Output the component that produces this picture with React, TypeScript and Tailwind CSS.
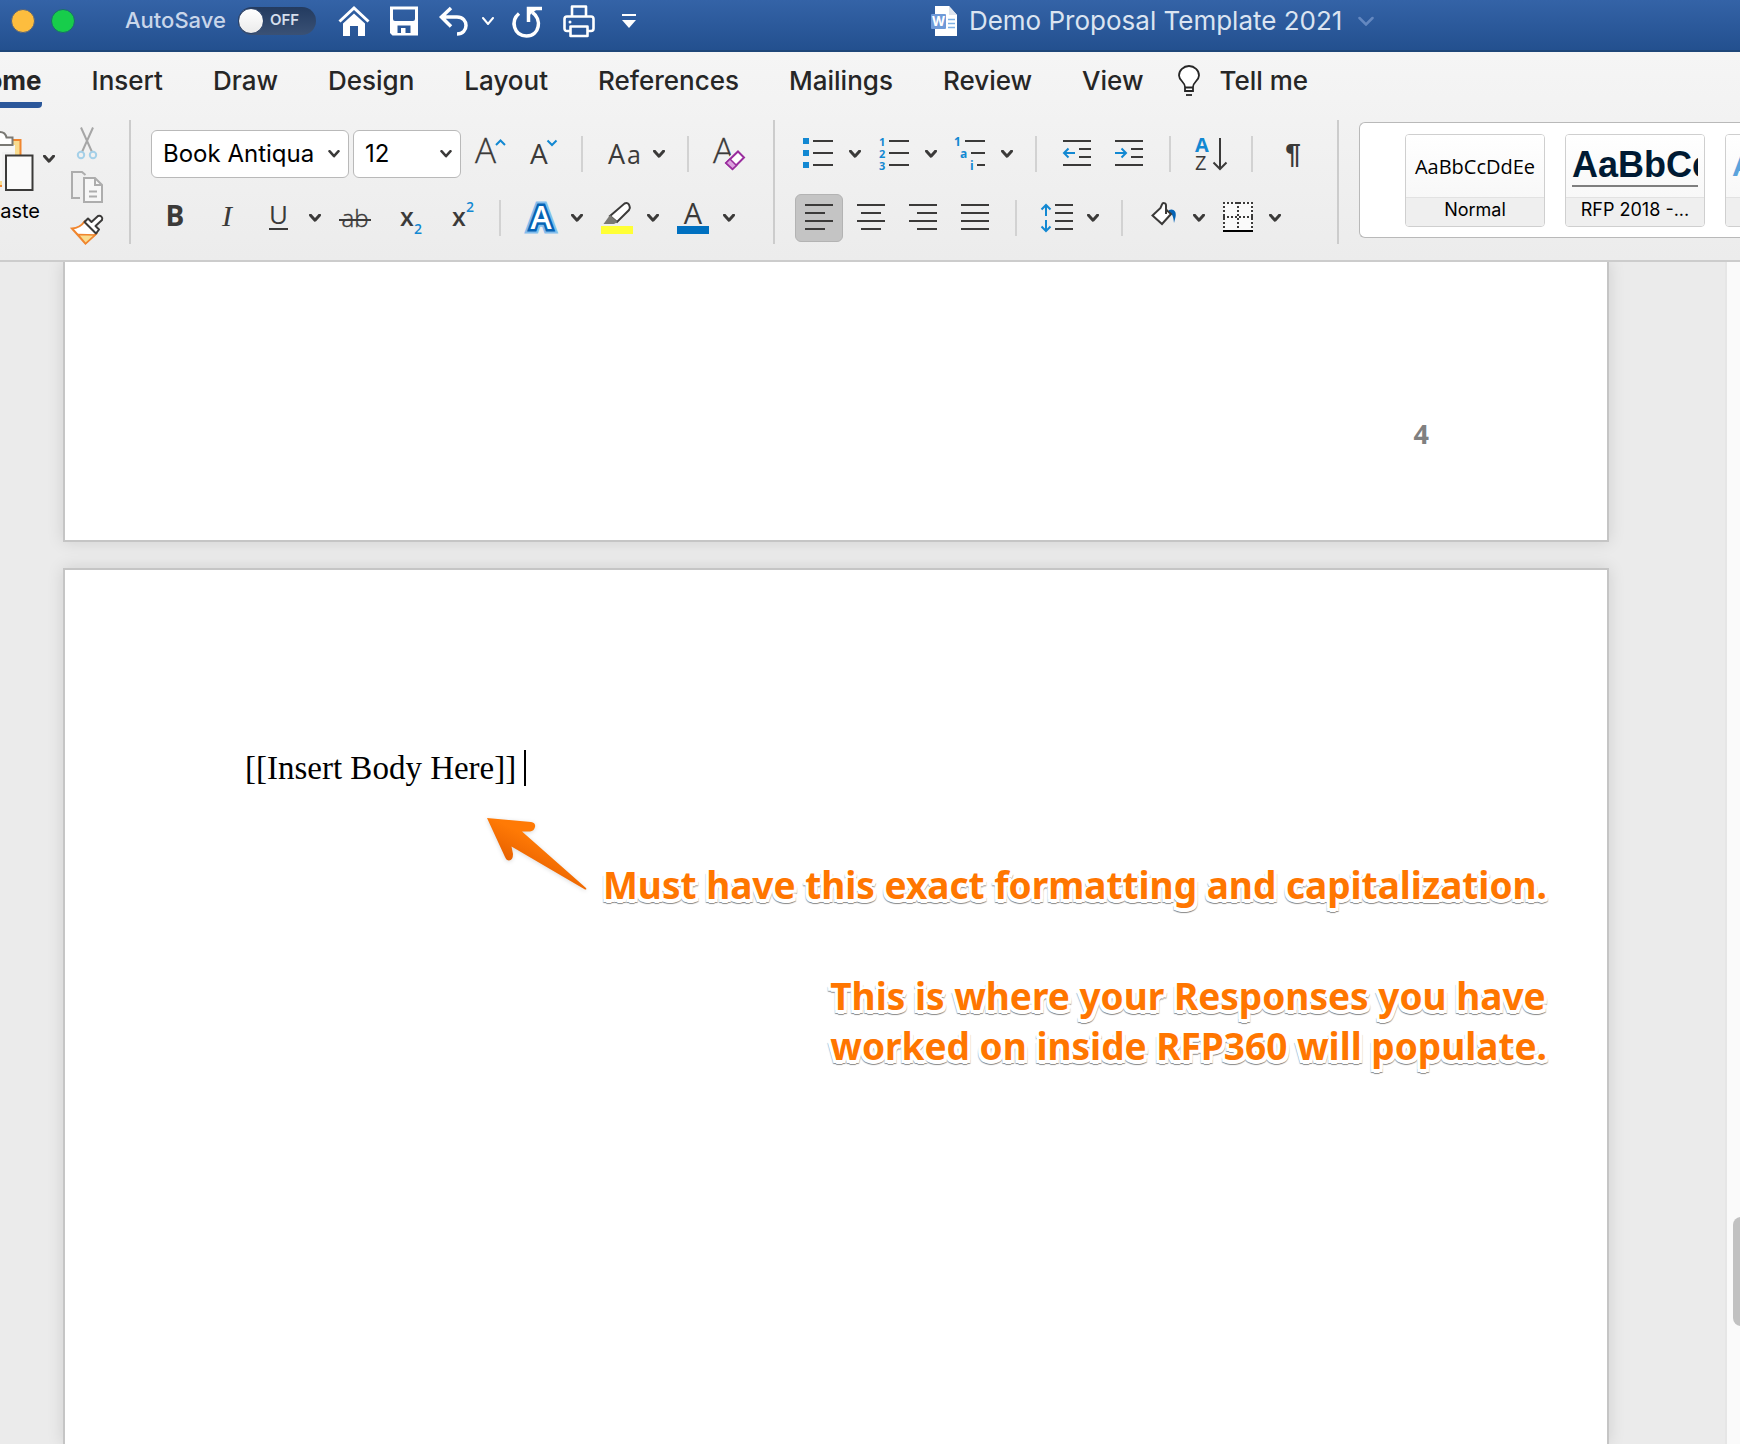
import React, { useState } from 'react';

const INK = '#3b3a39';
const BLUE = '#1288d2';

const TABS = ['Insert', 'Draw', 'Design', 'Layout', 'References', 'Mailings', 'Review', 'View'];

// 32x32 drawing cell shared by all ribbon icons
const Icon = ({ children }: { children: React.ReactNode }) => (
  <svg viewBox="0 0 32 32" className="w-8 h-8 shrink-0 overflow-visible" fill="none" fontFamily="'Open Sans', sans-serif" aria-hidden="true">
    {children}
  </svg>
);

const Tool = ({ label, active, children }: { label: string; active?: boolean; children: React.ReactNode }) => (
  <button
    aria-label={label}
    aria-pressed={active}
    className={`w-12 h-12 rounded-md flex items-center justify-center shrink-0 ${active ? 'bg-[#c4c4c4] border border-[#b3b3b3]' : ''}`}
  >
    <Icon>{children}</Icon>
  </button>
);

const More = ({ label }: { label: string }) => (
  <button aria-label={`${label} options`} className="w-6 h-12 flex items-center justify-center shrink-0 text-[#3b3a39]">
    <svg viewBox="0 0 12 8" className="w-3 h-2" fill="none" stroke="currentColor" strokeWidth="3" strokeLinecap="round" strokeLinejoin="round">
      <path d="M1.5 1.2 6 6.2 10.5 1.2" />
    </svg>
  </button>
);

const SplitTool = ({ label, children }: { label: string; children: React.ReactNode }) => (
  <div className="flex shrink-0">
    <Tool label={label}>{children}</Tool>
    <More label={label} />
  </div>
);

const Divider = () => <div className="w-0.5 h-9 mx-3 bg-[#d2d2d2] shrink-0" />;
const GroupDivider = () => <div className="w-0.5 h-[124px] mx-5 bg-[#cccccc] shrink-0" />;

// Horizontal rules of an icon, each as [x1, x2, y]
const Lines = ({ rows }: { rows: number[][] }) => (
  <path d={rows.map(([a, b, y]) => `M${a} ${y}H${b}`).join('')} stroke={INK} strokeWidth="2" />
);

const Combo = ({ label, options, className }: { label: string; options: string[]; className: string }) => (
  <div className={`relative h-12 shrink-0 ${className}`}>
    <select aria-label={label} className="appearance-none w-full h-full pl-[11px] rounded-md border border-[#b9b9b9] bg-white text-2xl text-black">
      {options.map((o) => <option key={o}>{o}</option>)}
    </select>
    <svg viewBox="0 0 12 8" className="absolute right-[9px] top-5 w-3 h-2 pointer-events-none" fill="none" stroke={INK} strokeWidth="2.5" strokeLinecap="round" strokeLinejoin="round">
      <path d="M1.5 1.2 6 6.2 10.5 1.2" />
    </svg>
  </div>
);

function TitleBar() {
  const [autoSave, setAutoSave] = useState(false);

  return (
    <header className="h-[52px] pb-[9px] pl-[11px] border-b-2 border-[#1e4679] bg-linear-to-b from-[#3463a7] to-[#23508f] flex items-center overflow-hidden whitespace-nowrap">
      <div className="flex gap-4 shrink-0">
        <button aria-label="Minimize" className="w-6 h-6 rounded-full bg-[#fdbd3e] border border-[#4f6180]" />
        <button aria-label="Zoom" className="w-6 h-6 rounded-full bg-[#17cd4b] border border-[#1b6a6c]" />
      </div>

      <label className="ml-[50px] flex items-center gap-3 shrink-0 text-[22px] font-medium text-[#c9d6ea]">
        AutoSave
        <input type="checkbox" className="sr-only" checked={autoSave} onChange={(e) => setAutoSave(e.target.checked)} />
        <span className="w-[78px] h-7 rounded-full bg-linear-to-b from-[#233b60] to-[#3a5175] flex items-center gap-1.5">
          <span className="w-[26px] h-[26px] rounded-full bg-linear-to-b from-white to-[#ebebeb] border border-[#2a4168]" />
          <span className="text-[15px] font-semibold text-[#d5deeb]">{autoSave ? 'ON' : 'OFF'}</span>
        </span>
      </label>

      <div className="ml-[22px] flex items-center shrink-0 text-white">
        <button aria-label="Home">
          <Icon>
            <path d="M1.500 16.500 16 3 30.500 16.500" stroke="#fff" strokeWidth="3" />
            <path d="M5 18.500 16 8.500 27 18.500V31H20V21H12V31H5Z" fill="#fff" />
          </Icon>
        </button>
        <button aria-label="Save" className="ml-[18px]">
          <Icon>
            <path fillRule="evenodd" d="M2 1.500h28v29H4.500L2 28ZM5 4.500V14q0 2 2 2h18q2 0 2-2V4.500ZM9.500 20.500V28h3.500V23H17.500v5h5V20.500Z" fill="#fff" />
          </Icon>
        </button>
        <button aria-label="Undo" className="ml-[18px]">
          <Icon>
            <path d="M13 3 3.500 12 13 21.500M4 12H19c12 0 12 17 0 17" stroke="#fff" strokeWidth="3.500" strokeLinejoin="miter" />
          </Icon>
        </button>
        <button aria-label="Undo history" className="ml-3">
          <svg viewBox="0 0 12 8" className="w-3 h-2" fill="none" stroke="currentColor" strokeWidth="2" strokeLinecap="round"><path d="M1 1 6 7 11 1" /></svg>
        </button>
        <button aria-label="Repeat" className="ml-[17px]">
          <Icon>
            <path d="M8 8.500C-1 16 3 31 15.500 31 29 31 31 14 21.500 7.500" stroke="#fff" strokeWidth="3.500" />
            <path d="M17.500 17V3.500H31" stroke="#fff" strokeWidth="3.500" />
            <path d="M17.500 3.500H27L17.500 11Z" fill="#fff" />
          </Icon>
        </button>
        <button aria-label="Print" className="ml-5">
          <Icon>
            <path d="M9 11V1.500H23V11M7 26H4q-2.500 0-2.500-2.500V14q0-2.500 2.500-2.500H28q2.500 0 2.500 2.500v9.500q0 2.500-2.500 2.500H25M7.500 21.500H24.500V31H7.500Z" stroke="#fff" strokeWidth="2.600" strokeLinejoin="round" />
            <circle cx="7" cy="17" r="1.500" fill="#fff" />
          </Icon>
        </button>
        <button aria-label="Customize toolbar" className="ml-[26px]">
          <svg viewBox="0 0 16 16" className="w-4 h-4" fill="currentColor"><path d="M1 1h14v2H1zM1 7h14l-7 8z" /></svg>
        </button>
      </div>

      <div className="ml-[294px] flex items-center shrink-0">
        <svg viewBox="0 0 26 30" className="w-[26px] h-[30px]" aria-hidden="true">
          <path d="M4 0H18L26 9V30H4Z" fill="#fff" />
          <path d="M18 0V9H26Z" fill="#dfe5ee" />
          <path d="M17 13.500h7M17 17.500h7M17 21.500h7" stroke="#7fb2e6" strokeWidth="1.500" />
          <rect y="8" width="15" height="15" rx="1" fill="#6f9ad8" />
          <text x="7.500" y="20" textAnchor="middle" fontSize="13" fontWeight="700" fontFamily="Inter, sans-serif" fill="#fff">W</text>
        </svg>
        <h1 className="ml-3 text-[26px] leading-8 text-[#dbe4f1]">Demo Proposal Template 2021</h1>
        <svg viewBox="0 0 16 10" className="ml-4 w-4 h-2.5" fill="none" stroke="#6488c0" strokeWidth="2.500" strokeLinecap="round" aria-hidden="true">
          <path d="M1.500 2 8 8.500 14.500 2" />
        </svg>
      </div>
    </header>
  );
}

function TabBar() {
  return (
    <nav className="h-16 flex items-start gap-[50px] overflow-hidden whitespace-nowrap text-[26px] leading-9 font-medium text-[#262626]">
      <a href="#home" className="-ml-[33px] h-14 pt-[11px] border-b-6 border-[#2b579a] rounded-b-sm font-bold">Home</a>
      {TABS.map((tab) => (
        <a key={tab} href={`#${tab.toLowerCase()}`} className="pt-[11px]">{tab}</a>
      ))}
      <a href="#tell-me" className="-ml-4 pt-[11px] flex items-center gap-[18px]">
        <svg viewBox="0 0 24 32" className="w-6 h-8" fill="none" stroke="#262626" strokeWidth="1.800" aria-hidden="true">
          <path d="M8 22C8 17 2 15.500 2 10.500a10 9.500 0 0 1 20 0C22 15.500 16 17 16 22V26H8ZM8 22.500H16" fill="#fff" />
          <path d="M9 30H15" />
        </svg>
        Tell me
      </a>
    </nav>
  );
}

function Clipboard() {
  return (
    <div className="flex shrink-0 -ml-[27px]">
      <div className="flex">
        <button className="w-16 flex flex-col items-end gap-1.5 text-xl text-black">
          <svg viewBox="0 0 64 64" className="w-16 h-16 shrink-0" fill="none" aria-hidden="true">
            <path d="M7 13H47.500V59H7Z" fill="#f9dc8f" stroke="#f0862f" strokeWidth="2" />
            <path d="M12 18H42V54H12Z" fill="#f7f7f7" />
            <path d="M14 18V10.500H20.500C22 3 32 3 33.500 10.500H39.500V18Z" fill="#fff" stroke="#7a7974" strokeWidth="2" />
            <path d="M29 25H42V63H29Z" fill="#f2f2f2" />
            <path d="M33 28.500H59.500V63H33Z" fill="#fafafa" stroke={INK} strokeWidth="2" />
          </svg>
          <span className="-mr-[3px]">Paste</span>
        </button>
        <div className="pt-2"><More label="Paste" /></div>
      </div>
      <div className="ml-[10px] mr-[6px] flex flex-col gap-3">
        <button aria-label="Cut">
          <Icon>
            <path d="M10 .5 21 25M22 .5 11 25" stroke="#a6a6a6" strokeWidth="2" />
            <circle cx="10" cy="28" r="3.200" stroke="#a5d0e8" strokeWidth="2" />
            <circle cx="22" cy="28" r="3.200" stroke="#a5d0e8" strokeWidth="2" />
          </Icon>
        </button>
        <button aria-label="Copy">
          <Icon>
            <path d="M9 27H1V1H11L14.500 4" stroke="#adadad" strokeWidth="2" />
            <path d="M13 7H24L31 14V31H13Z" fill="#f7f7f7" stroke="#adadad" strokeWidth="2" />
            <path d="M24 7V14H31M18 20.500H26M18 25.500H26" stroke="#adadad" strokeWidth="2" />
          </Icon>
        </button>
        <button aria-label="Format painter">
          <Icon>
            <path d="M1 13.500Q9 13 13.500 6.500L25.500 18.500 14.500 28.500Z" fill="#fff" stroke="#f0862f" strokeWidth="2" />
            <path d="M7 19.500 24 20 14.500 28.500Z" fill="#f9dc8f" stroke="#f0862f" strokeWidth="1.500" />
            <path d="M13.500 7 17 3.500 20.500 7 27 1a3 3 0 0 1 4 4L24.500 11 28 14.500 25 18.500Z" fill="#fff" stroke={INK} strokeWidth="2" strokeLinejoin="round" />
          </Icon>
        </button>
      </div>
    </div>
  );
}

function FontGroup() {
  return (
    <div className="flex flex-col gap-4 shrink-0">
      <div className="flex items-center gap-1">
        <Combo label="Font" options={['Book Antiqua', 'Arial', 'Calibri']} className="w-[198px]" />
        <Combo label="Font size" options={['12', '14', '16']} className="w-[108px]" />
        <Tool label="Increase font size">
          <text x="2" y="25" fontSize="35" fontWeight="300" fill={INK} stroke={INK} strokeWidth=".3">A</text>
          <path d="M23 7 27.500 2.500 32 7" stroke={BLUE} strokeWidth="2" />
        </Tool>
        <Tool label="Decrease font size">
          <text x="5" y="26" fontSize="28" fill={INK}>A</text>
          <path d="M22.500 2.500 27 7 31.500 2.500" stroke={BLUE} strokeWidth="2" />
        </Tool>
        <Divider />
        <SplitTool label="Change case">
          <text x="1" y="26" fontSize="27" fill={INK}>A</text>
          <text x="20" y="26" fontSize="25" fill={INK}>a</text>
        </SplitTool>
        <Divider />
        <Tool label="Clear formatting">
          <text x="0" y="25" fontSize="35" fontWeight="300" fill={INK} stroke={INK} strokeWidth=".3">A</text>
          <path d="M25 13.500 31 19.500 19.500 31 13 25Z" fill="#f1f1f1" stroke="#f1f1f1" strokeWidth="5" />
          <path d="M25 13.500 31 19.500 19.500 31 13 25Z" fill="#fff" stroke="#9a2d9e" strokeWidth="2" />
          <path d="M13 25 17 21 23.500 27.500 19.500 31Z" fill="#dba0dd" stroke="#9a2d9e" strokeWidth="1.500" />
        </Tool>
      </div>
      <div className="flex items-center gap-1">
        <Tool label="Bold"><text x="16" y="24" textAnchor="middle" fontSize="28" fontWeight="700" fill={INK}>B</text></Tool>
        <Tool label="Italic"><text x="16" y="24" textAnchor="middle" fontSize="30" fontStyle="italic" fontFamily="'Liberation Serif', serif" fill={INK}>I</text></Tool>
        <SplitTool label="Underline">
          <text x="15.500" y="22" textAnchor="middle" fontSize="26" fill={INK}>U</text>
          <Lines rows={[[6, 25, 27]]} />
        </SplitTool>
        <Tool label="Strikethrough">
          <text x="16" y="25" textAnchor="middle" fontSize="24" fontWeight="300" fill={INK} stroke={INK} strokeWidth=".4">ab</text>
          <Lines rows={[[0, 32, 18]]} />
        </Tool>
        <Tool label="Subscript">
          <text x="9" y="24" fontSize="25" fontWeight="600" fill={INK}>x</text>
          <text x="23" y="32" fontSize="14" fontWeight="600" fill={BLUE}>2</text>
        </Tool>
        <Tool label="Superscript">
          <text x="9" y="24" fontSize="25" fontWeight="600" fill={INK}>x</text>
          <text x="23" y="10" fontSize="14" fontWeight="600" fill={BLUE}>2</text>
        </Tool>
        <Divider />
        <SplitTool label="Text effects">
          <g fontSize="32" fontWeight="600" textAnchor="middle" strokeMiterlimit="2">
            <text x="16" y="27" stroke="#83beec" strokeWidth="9" fill="#83beec">A</text>
            <text x="16" y="27" stroke="#0563b5" strokeWidth="5" fill="#0563b5">A</text>
            <text x="16" y="27" fill="#fff">A</text>
          </g>
        </SplitTool>
        <SplitTool label="Highlight color">
          <path d="M9 14 23.500 1.500q4-1.500 5 2.500 1 2-.5 4L16 20Z" fill="#fff" stroke={INK} strokeWidth="2" />
          <path d="M2.500 22 9 13 16.500 20 13 22Z" fill="#7a7974" />
          <rect y="24" width="32" height="8" fill="#ffff35" />
        </SplitTool>
        <SplitTool label="Font color">
          <text x="16" y="22" textAnchor="middle" fontSize="29" fill={INK}>A</text>
          <rect y="24" width="32" height="8" fill="#0070c0" />
        </SplitTool>
      </div>
    </div>
  );
}

function ParagraphGroup() {
  return (
    <div className="flex flex-col gap-4 shrink-0">
      <div className="flex items-center gap-1">
        <SplitTool label="Bullets">
          <path d="M0 0h6v6H0zM0 12h6v6H0zM0 24h6v6H0z" fill={BLUE} />
          <Lines rows={[[10, 30, 3], [10, 30, 15], [10, 30, 27]]} />
        </SplitTool>
        <SplitTool label="Numbering">
          <g fontSize="11" fontWeight="700" fill={BLUE}>
            <text x="0" y="8">1</text>
            <text x="0" y="20">2</text>
            <text x="0" y="32">3</text>
          </g>
          <Lines rows={[[10, 30, 3], [10, 30, 15], [10, 30, 27]]} />
        </SplitTool>
        <SplitTool label="Multilevel list">
          <g fontSize="12" fontWeight="700" fill={BLUE}>
            <text x="-1" y="8">1</text>
            <text x="5" y="20">a</text>
            <text x="15" y="32">i</text>
          </g>
          <Lines rows={[[10, 30, 3], [16, 30, 15], [22, 30, 27]]} />
        </SplitTool>
        <Divider />
        <Tool label="Decrease indent">
          <Lines rows={[[2, 30, 3], [18, 30, 11], [18, 30, 19], [2, 30, 27]]} />
          <path d="M14 15H3M7.500 10.500 3 15 7.500 19.500" stroke={BLUE} strokeWidth="2" />
        </Tool>
        <Tool label="Increase indent">
          <Lines rows={[[2, 30, 3], [18, 30, 11], [18, 30, 19], [2, 30, 27]]} />
          <path d="M2 15H13M8.500 10.500 13 15 8.500 19.500" stroke={BLUE} strokeWidth="2" />
        </Tool>
        <Divider />
        <Tool label="Sort">
          <text x="0" y="14" fontSize="20" fontWeight="700" fill={BLUE}>A</text>
          <text x="0" y="32" fontSize="20" fontWeight="500" fill={INK}>Z</text>
          <path d="M25 0V30M18.500 24.500 25 31 31.500 24.500" stroke={INK} strokeWidth="2" />
        </Tool>
        <Divider />
        <Tool label="Show formatting marks">
          <text x="16" y="25" textAnchor="middle" fontSize="28" fontWeight="700" fontFamily="'Liberation Sans', sans-serif" fill={INK}>¶</text>
        </Tool>
      </div>
      <div className="flex items-center gap-1">
        <Tool label="Align left" active><Lines rows={[[2, 30, 3], [2, 22, 11], [2, 30, 19], [2, 22, 27]]} /></Tool>
        <Tool label="Align center"><Lines rows={[[2, 30, 3], [6, 26, 11], [2, 30, 19], [6, 26, 27]]} /></Tool>
        <Tool label="Align right"><Lines rows={[[2, 30, 3], [10, 30, 11], [2, 30, 19], [10, 30, 27]]} /></Tool>
        <Tool label="Justify"><Lines rows={[[2, 30, 3], [2, 30, 11], [2, 30, 19], [2, 30, 27]]} /></Tool>
        <Divider />
        <SplitTool label="Line spacing">
          <Lines rows={[[14, 32, 3], [14, 32, 11], [14, 32, 19], [14, 32, 27]]} />
          <path d="M5 14V3M.5 7.500 5 3 9.500 7.500M5 18V29M.5 24.500 5 29 9.500 24.500" stroke={BLUE} strokeWidth="2" />
        </SplitTool>
        <Divider />
        <SplitTool label="Shading">
          <path d="M22 8c4-2 8 1 6.500 7L27 21C26.500 15 25.500 12 22 10Z" fill="#0563b5" />
          <path d="M19 7.500 24 12 15 22 5.500 13.500 13.500 6 15 2.500C15.500.5 19 .5 19 3.500V12" fill="#fff" stroke={INK} strokeWidth="2" />
        </SplitTool>
        <SplitTool label="Borders">
          <path d="M0 0H30V30H0Z" fill="#fafafa" />
          <path d="M0 1H30M0 15H30" stroke={INK} strokeWidth="2" strokeDasharray="2 2" />
          <path d="M1 0V28M15 0V28M29 0V28" stroke={INK} strokeWidth="2" strokeDasharray="2 2" />
          <path d="M0 29H30" stroke="#000" strokeWidth="2" />
        </SplitTool>
      </div>
    </div>
  );
}

const StyleCard = ({ name, children }: { name: string; children: React.ReactNode }) => (
  <button className="w-[140px] h-[93px] shrink-0 rounded-sm border border-[#cfcfcf] bg-white flex flex-col overflow-hidden whitespace-nowrap">
    <span className="h-[62px] w-full px-1.5 flex items-center justify-center bg-linear-to-b from-white to-[#f8f8f8]">{children}</span>
    <span className="flex-1 w-full border-t border-[#e2e2e2] bg-[#efefef] text-lg leading-6 text-black">{name}</span>
  </button>
);

function StyleGallery() {
  return (
    <div className="h-[116px] mt-0.5 pl-[45px] flex flex-1 min-w-0 items-center gap-5 overflow-hidden rounded-l-md border border-r-0 border-[#b9b9b9] bg-white">
      <StyleCard name="Normal">
        <span className="pt-0.5 font-['Open_Sans'] text-[20px] font-medium">AaBbCcDdEe</span>
      </StyleCard>
      <StyleCard name="RFP 2018 -...">
        <span className="w-full overflow-hidden border-b-2 border-[#7f7f7f] text-left font-['Liberation_Sans'] font-bold text-4xl text-[#001a33]">AaBbCc</span>
      </StyleCard>
      <StyleCard name="Heading 1">
        <span className="w-full overflow-hidden text-left font-['Liberation_Sans'] font-bold text-3xl text-[#5ba3dc]">AaBbCc</span>
      </StyleCard>
    </div>
  );
}

// White halo with a thin grey edge under it
const calloutShadow =
  '[text-shadow:2px_0_0_#fff,-2px_0_0_#fff,0_2px_0_#fff,0_-2px_0_#fff,3px_3px_0_#fff,-3px_3px_0_#fff,3px_0_0_#fff,-3px_0_0_#fff,0_4px_0_#fff,0_5px_1px_#8a8a8a,3px_4px_1px_#8a8a8a,-3px_4px_1px_#8a8a8a]';

function Document() {
  return (
    <main className="flex-1 flex bg-[#ebebeb] overflow-hidden">
      <div className="flex-1 min-w-0 pl-[63px] pr-[116px] flex flex-col gap-[26px]">
        <section className="h-[280px] bg-white border-2 border-t-0 border-[#c5c5c5] shadow-[0_0_16px_rgba(0,0,0,0.12)] flex justify-end pr-[178px] pt-[152px]">
          <span className="font-['Open_Sans'] font-bold text-[27px] leading-10 text-[#808080]">4</span>
        </section>

        <section className="relative flex-1 min-h-[876px] bg-white border-2 border-b-0 border-[#c5c5c5] shadow-[0_0_16px_rgba(0,0,0,0.12)] pt-[180px]">
          <p className="pl-[180px] flex items-center gap-2 font-['Liberation_Serif'] text-[33px] leading-9 text-black">
            [[Insert Body Here]]
            <span className="w-0.5 h-9 bg-black" />
          </p>

          <svg viewBox="0 0 102 74" className="absolute left-[422px] top-[247px] w-[102px] h-[74px] drop-shadow-sm" aria-hidden="true">
            <defs>
              <linearGradient id="arrow" x1="0.300" y1="0.700" x2="0.550" y2="0.350">
                <stop offset="0" stopColor="#e65f00" />
                <stop offset="1" stopColor="#ff7a05" />
              </linearGradient>
            </defs>
            <path d="M0 1 44 5Q49 6 48 10T43 14.500H35L99 71Q100 73 98 72.500L24.500 29.500 26 37Q26 43 22 43.500 19.500 43.500 18 40Z" fill="url(#arrow)" />
          </svg>

          <div className={`mt-[74px] pr-[60px] flex flex-col items-end gap-[61px] font-['Noto_Sans'] font-bold text-[37px] leading-[50px] text-[#ff7600] ${calloutShadow}`}>
            <p>Must have this exact formatting and capitalization.</p>
            <p>This is where your Responses you have<br />worked on inside RFP360 will populate.</p>
          </div>
        </section>
      </div>

      <div className="w-[15px] border-l-2 border-[#e6e6e6] bg-[#fafafa] overflow-hidden pt-[955px] pl-1.5">
        <div className="w-4 h-[109px] rounded-lg bg-[#c1c1c1]" />
      </div>
    </main>
  );
}

export default function App() {
  return (
    <div className="min-h-screen flex flex-col bg-[#f3f3f3] font-[Inter,sans-serif] overflow-hidden">
      <TitleBar />
      <div className="bg-linear-to-b from-[#f5f5f5] to-[#ececec] border-b-2 border-[#cccccc]">
        <TabBar />
        <div className="h-36 pt-1 flex items-start overflow-hidden">
          <div className="pt-[7px]"><Clipboard /></div>
          <GroupDivider />
          <div className="pt-2.5"><FontGroup /></div>
          <GroupDivider />
          <div className="pt-2.5"><ParagraphGroup /></div>
          <GroupDivider />
          <StyleGallery />
        </div>
      </div>
      <Document />
    </div>
  );
}
